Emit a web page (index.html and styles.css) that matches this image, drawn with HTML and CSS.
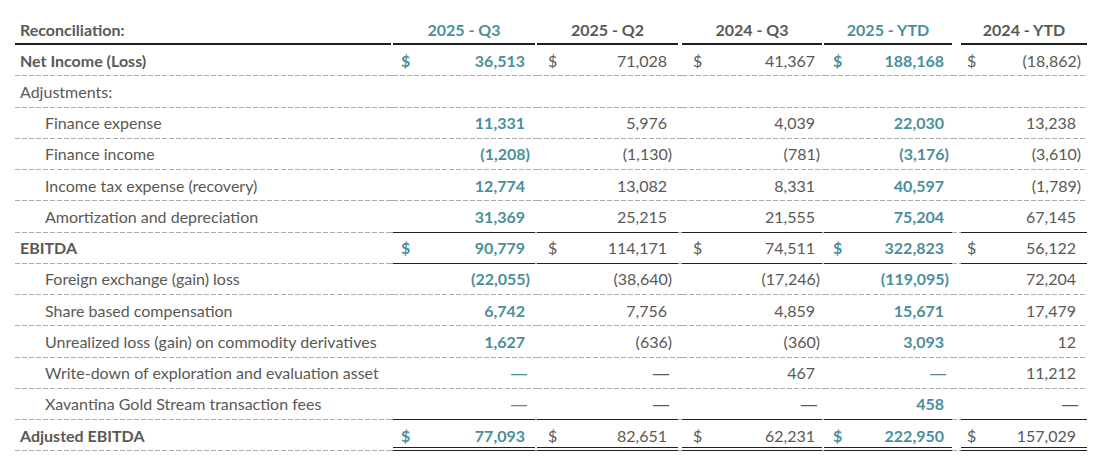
FILE: index.html
```html
<!DOCTYPE html>
<html>
<head>
<meta charset="utf-8">
<link rel="stylesheet" href="styles.css">
</head>
<body>
<table class="recon">
  <colgroup>
    <col class="w-label"><col class="w-g2"><col class="w-c1"><col class="w-g2"><col class="w-c2"><col class="w-g4"><col class="w-c3"><col class="w-g2"><col class="w-c4"><col class="w-g9"><col class="w-c5">
  </colgroup>
  <thead>
    <tr class="head">
      <th class="label">Reconciliation:</th><th class="gap"></th>
      <th class="hl">2025 - Q3</th><th class="gap"></th>
      <th>2025 - Q2</th><th class="gap"></th>
      <th>2024 - Q3</th><th class="gap"></th>
      <th class="hl">2025 - YTD</th><th class="gap"></th>
      <th>2024 - YTD</th>
    </tr>
  </thead>
  <tbody>
    <tr class="bold">
      <td class="label">Net Income (Loss)</td><td class="gap"></td>
      <td class="v c1 hl"><span class="cur">$</span><span class="n">36,513</span></td><td class="gap"></td>
      <td class="v c2"><span class="cur">$</span><span class="n">71,028</span></td><td class="gap"></td>
      <td class="v c3"><span class="cur">$</span><span class="n">41,367</span></td><td class="gap"></td>
      <td class="v c4 hl"><span class="cur">$</span><span class="n">188,168</span></td><td class="gap"></td>
      <td class="v c5"><span class="cur">$</span><span class="n neg">(18,862)</span></td>
    </tr>
    <tr>
      <td class="label plain">Adjustments:</td><td class="gap"></td>
      <td class="v c1"></td><td class="gap"></td>
      <td class="v c2"></td><td class="gap"></td>
      <td class="v c3"></td><td class="gap"></td>
      <td class="v c4"></td><td class="gap"></td>
      <td class="v c5"></td>
    </tr>
    <tr>
      <td class="label indent">Finance expense</td><td class="gap"></td>
      <td class="v c1 hl"><span class="n">11,331</span></td><td class="gap"></td>
      <td class="v c2"><span class="n">5,976</span></td><td class="gap"></td>
      <td class="v c3"><span class="n">4,039</span></td><td class="gap"></td>
      <td class="v c4 hl"><span class="n">22,030</span></td><td class="gap"></td>
      <td class="v c5"><span class="n">13,238</span></td>
    </tr>
    <tr>
      <td class="label indent">Finance income</td><td class="gap"></td>
      <td class="v c1 hl"><span class="n neg">(1,208)</span></td><td class="gap"></td>
      <td class="v c2"><span class="n neg">(1,130)</span></td><td class="gap"></td>
      <td class="v c3"><span class="n neg">(781)</span></td><td class="gap"></td>
      <td class="v c4 hl"><span class="n neg">(3,176)</span></td><td class="gap"></td>
      <td class="v c5"><span class="n neg">(3,610)</span></td>
    </tr>
    <tr>
      <td class="label indent">Income tax expense (recovery)</td><td class="gap"></td>
      <td class="v c1 hl"><span class="n">12,774</span></td><td class="gap"></td>
      <td class="v c2"><span class="n">13,082</span></td><td class="gap"></td>
      <td class="v c3"><span class="n">8,331</span></td><td class="gap"></td>
      <td class="v c4 hl"><span class="n">40,597</span></td><td class="gap"></td>
      <td class="v c5"><span class="n neg">(1,789)</span></td>
    </tr>
    <tr class="pre-sub">
      <td class="label indent">Amortization and depreciation</td><td class="gap"></td>
      <td class="v c1 hl"><span class="n">31,369</span></td><td class="gap"></td>
      <td class="v c2"><span class="n">25,215</span></td><td class="gap"></td>
      <td class="v c3"><span class="n">21,555</span></td><td class="gap"></td>
      <td class="v c4 hl"><span class="n">75,204</span></td><td class="gap"></td>
      <td class="v c5"><span class="n">67,145</span></td>
    </tr>
    <tr class="bold sub">
      <td class="label">EBITDA</td><td class="gap"></td>
      <td class="v c1 hl"><span class="cur">$</span><span class="n">90,779</span></td><td class="gap"></td>
      <td class="v c2"><span class="cur">$</span><span class="n">114,171</span></td><td class="gap"></td>
      <td class="v c3"><span class="cur">$</span><span class="n">74,511</span></td><td class="gap"></td>
      <td class="v c4 hl"><span class="cur">$</span><span class="n">322,823</span></td><td class="gap"></td>
      <td class="v c5"><span class="cur">$</span><span class="n">56,122</span></td>
    </tr>
    <tr>
      <td class="label indent">Foreign exchange (gain) loss</td><td class="gap"></td>
      <td class="v c1 hl"><span class="n neg">(22,055)</span></td><td class="gap"></td>
      <td class="v c2"><span class="n neg">(38,640)</span></td><td class="gap"></td>
      <td class="v c3"><span class="n neg">(17,246)</span></td><td class="gap"></td>
      <td class="v c4 hl"><span class="n neg">(119,095)</span></td><td class="gap"></td>
      <td class="v c5"><span class="n">72,204</span></td>
    </tr>
    <tr>
      <td class="label indent">Share based compensation</td><td class="gap"></td>
      <td class="v c1 hl"><span class="n">6,742</span></td><td class="gap"></td>
      <td class="v c2"><span class="n">7,756</span></td><td class="gap"></td>
      <td class="v c3"><span class="n">4,859</span></td><td class="gap"></td>
      <td class="v c4 hl"><span class="n">15,671</span></td><td class="gap"></td>
      <td class="v c5"><span class="n">17,479</span></td>
    </tr>
    <tr>
      <td class="label indent">Unrealized loss (gain) on commodity derivatives</td><td class="gap"></td>
      <td class="v c1 hl"><span class="n">1,627</span></td><td class="gap"></td>
      <td class="v c2"><span class="n neg">(636)</span></td><td class="gap"></td>
      <td class="v c3"><span class="n neg">(360)</span></td><td class="gap"></td>
      <td class="v c4 hl"><span class="n">3,093</span></td><td class="gap"></td>
      <td class="v c5"><span class="n">12</span></td>
    </tr>
    <tr>
      <td class="label indent">Write-down of exploration and evaluation asset</td><td class="gap"></td>
      <td class="v c1 hl"><span class="n dash">—</span></td><td class="gap"></td>
      <td class="v c2"><span class="n dash">—</span></td><td class="gap"></td>
      <td class="v c3"><span class="n">467</span></td><td class="gap"></td>
      <td class="v c4 hl"><span class="n dash">—</span></td><td class="gap"></td>
      <td class="v c5"><span class="n">11,212</span></td>
    </tr>
    <tr class="pre-sub">
      <td class="label indent">Xavantina Gold Stream transaction fees</td><td class="gap"></td>
      <td class="v c1 hl"><span class="n dash">—</span></td><td class="gap"></td>
      <td class="v c2"><span class="n dash">—</span></td><td class="gap"></td>
      <td class="v c3"><span class="n dash">—</span></td><td class="gap"></td>
      <td class="v c4 hl"><span class="n">458</span></td><td class="gap"></td>
      <td class="v c5"><span class="n dash">—</span></td>
    </tr>
    <tr class="bold total">
      <td class="label">Adjusted EBITDA</td><td class="gap"></td>
      <td class="v c1 hl"><span class="cur">$</span><span class="n">77,093</span></td><td class="gap"></td>
      <td class="v c2"><span class="cur">$</span><span class="n">82,651</span></td><td class="gap"></td>
      <td class="v c3"><span class="cur">$</span><span class="n">62,231</span></td><td class="gap"></td>
      <td class="v c4 hl"><span class="cur">$</span><span class="n">222,950</span></td><td class="gap"></td>
      <td class="v c5"><span class="cur">$</span><span class="n">157,029</span></td>
    </tr>
  </tbody>
</table>
</body>
</html>
```

FILE: styles.css
```css
html, body {
  margin: 0;
  padding: 0;
  background: #ffffff;
}

body {
  font-family: "Lato", "Noto Sans", sans-serif;
  font-size: 16px;
  color: #595955;
}

.recon {
  margin: 13px 0 0 15px;
  border-collapse: separate;
  border-spacing: 0;
  table-layout: fixed;
  width: 1072px;
}

.w-label { width: 376px; }
.w-g2 { width: 2px; }
.w-g4 { width: 4px; }
.w-g9 { width: 9px; }
.w-c1 { width: 142px; }
.w-c2 { width: 141px; }
.w-c3 { width: 140px; }
.w-c4 { width: 128px; }
.w-c5 { width: 126px; }

.recon th,
.recon td {
  padding: 0;
  border: 0;
  white-space: nowrap;
}

.head th {
  font-weight: 700;
  text-align: center;
  height: 32px;
  vertical-align: middle;
  padding-top: 1px;
  box-sizing: border-box;
  background: linear-gradient(#1f1f1f, #1f1f1f) left bottom / 100% 2px no-repeat;
}

.head th.label {
  text-align: left;
  padding-left: 5px;
}

.head th.gap {
  background: none;
}

.recon tbody td {
  height: 31.25px;
  line-height: 30px;
  vertical-align: middle;
  background: repeating-linear-gradient(90deg, #ababab 0 5px, transparent 5px 7px) left bottom / 100% 1px no-repeat;
}

.label {
  text-align: left;
}

td.label {
  padding-left: 5px;
}

td.label.indent {
  padding-left: 30px;
}

.bold td {
  font-weight: 700;
}

.hl {
  color: #4a8f9b;
  font-weight: 700;
}

.v {
  text-align: right;
  padding-right: 4px;
}

.recon td.v.c1 { padding-left: 8px; padding-right: 5px; }
.recon td.v.c2 { padding-left: 11px; padding-right: 6px; }
.recon td.v.c3 { padding-left: 11px; padding-right: 2px; }
.recon td.v.c4 { padding-left: 9px; padding-right: 3px; }
.recon td.v.c5 { padding-left: 6px; padding-right: 6px; }

.bold td.v:not(.hl) {
  font-weight: 400;
}

.cur {
  float: left;
}

.n {
  padding-right: 5px;
}

.n.neg {
  padding-right: 0;
}

.n.dash {
  font-family: "Liberation Sans", sans-serif;
  font-weight: 400;
  padding-right: 3px;
}

.recon .pre-sub td.v,
.recon .sub td.v {
  background: linear-gradient(#1f1f1f, #1f1f1f) left bottom / 100% 1px no-repeat;
}

.recon .total td.v {
  background:
    linear-gradient(#1f1f1f, #1f1f1f) left bottom / 100% 1px no-repeat,
    linear-gradient(#1f1f1f, #1f1f1f) left calc(100% - 3px) / 100% 1px no-repeat;
}
```
